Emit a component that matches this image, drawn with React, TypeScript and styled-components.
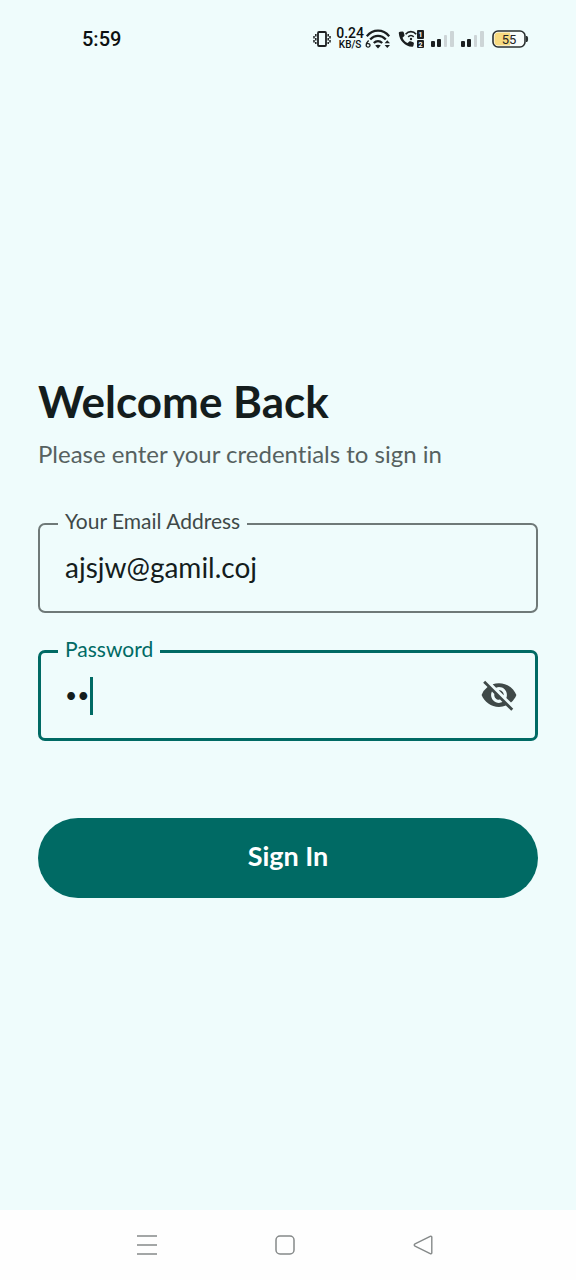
import React, { useState } from "react";
import styled, { createGlobalStyle } from "styled-components";
import { MdVisibility, MdVisibilityOff } from "react-icons/md";

const color = {
  page: "#effcfc",
  ink: "#141d1d",
  muted: "#566160",
  label: "#3f4948",
  outline: "#6f7978",
  primary: "#006a64",
  status: "#1b1f20",
};

const GlobalStyle = createGlobalStyle`
  *, *::before, *::after { box-sizing: border-box; }
  body {
    margin: 0;
    background: ${color.page};
    color: ${color.ink};
    font-family: Lato, "Open Sans", sans-serif;
    font-variant-ligatures: none;
  }
`;

const Screen = styled.div`
  display: flex;
  flex-direction: column;
  min-height: 100vh;
`;

const StatusBar = styled.header`
  display: flex;
  align-items: center;
  justify-content: space-between;
  height: 78px;
  padding: 0 47px 0 82px;
  font-family: Roboto, sans-serif;
  color: #0c1011;
`;

const Clock = styled.time`
  font-size: 20px;
  line-height: 24px;
  font-weight: 500;
`;

const StatusIcons = styled.div`
  display: flex;
  align-items: center;
  gap: 7px;
  svg { display: block; }
`;

const NetSpeed = styled.div`
  display: flex;
  flex-direction: column;
  align-items: center;
  margin: 0 -6px 0 -2px;
  font-weight: 500;
`;

const SpeedValue = styled.span`
  font-size: 14px;
  line-height: 11px;
`;

const SpeedUnit = styled.span`
  font-size: 10px;
  line-height: 11px;
`;

const Main = styled.main`
  flex: 1;
  display: flex;
  flex-direction: column;
  justify-content: center;
  padding: 0 38px 18px;
`;

const Title = styled.h1`
  margin: 0;
  font-size: 44px;
  line-height: 56px;
  font-weight: 700;
`;

const Subtitle = styled.p`
  margin: 9px 0 38px;
  font-size: 24px;
  line-height: 32px;
  color: ${color.muted};
`;

const Form = styled.form`
  display: flex;
  flex-direction: column;
`;

const Field = styled.fieldset<{ $active?: boolean }>`
  min-width: 0;
  height: 105px;
  margin: 0 0 23px;
  padding: 0 ${(p) => (p.$active ? 17 : 18)}px;
  border: ${(p) => (p.$active ? 3 : 2)}px solid ${(p) => (p.$active ? color.primary : color.outline)};
  border-radius: 7px;
  color: ${(p) => (p.$active ? color.primary : color.label)};
`;

const Legend = styled.legend`
  padding: 0 7px 6px;
  font-size: 21px;
  line-height: 26px;
`;

const InputRow = styled.div`
  position: relative;
  display: flex;
  align-items: center;
  height: 54px;
  padding-left: 7px;
`;

const Input = styled.input`
  flex: 1;
  min-width: 0;
  height: 40px;
  padding: 0;
  border: 0;
  outline: 0;
  background: transparent;
  color: ${color.ink};
  caret-color: transparent;
  font: 28px/40px Lato, "Open Sans", sans-serif;

  &[type="password"] {
    font-size: 21px;
  }
`;

const Caret = styled.span`
  position: absolute;
  left: 32px;
  top: 9px;
  width: 3px;
  height: 38px;
  background: ${color.primary};
`;

const IconButton = styled.button`
  display: flex;
  padding: 0;
  border: 0;
  background: transparent;
  color: ${color.label};
  cursor: pointer;
`;

const SubmitButton = styled.button`
  height: 80px;
  margin-top: 54px;
  padding: 0 0 4px;
  border: 0;
  border-radius: 40px;
  background: ${color.primary};
  color: #fff;
  font: 700 27px/32px Lato, "Open Sans", sans-serif;
  cursor: pointer;
`;

const NavBar = styled.nav`
  display: flex;
  align-items: center;
  justify-content: center;
  gap: 114px;
  height: 70px;
  padding-right: 6px;
  background: #fefefe;
`;

const NavButton = styled.button`
  display: flex;
  padding: 0;
  border: 0;
  background: transparent;
  cursor: pointer;
`;

const VibrateIcon = () => (
  <svg width="18" height="18" viewBox="0 0 18 18" fill="none" stroke={color.status} aria-hidden="true">
    <rect x="5" y="2" width="8" height="14" rx="1" strokeWidth="1.8" />
    <path d="M2.800 4v2.500M2.800 8v2.500M2.800 12v2M1 6v2.500M1 10v2.500M15.200 4v2.500M15.200 8v2.500M15.200 12v2M17 6v2.500M17 10v2.500" strokeWidth="1.500" />
  </svg>
);

const WifiIcon = () => (
  <svg width="26" height="20" viewBox="0 0 26 20" fill="none" stroke={color.status} strokeWidth="2.2" aria-hidden="true">
    <path d="M1.800 7.200C8-.2 18-.2 24.200 7.200M5.200 10.600c4.400-5 11.200-5 15.600 0M8.800 14c2.500-2.600 5.900-2.600 8.400 0" />
    <path d="M10.200 16.600 13 19.400l2.800-2.800c-1.500-1.300-4.100-1.300-5.600 0zM19.600 14.200h5.400l-2.700-3zM19.600 16h5.400l-2.700 3z" fill={color.status} stroke="none" />
    <path d="M3.600 11.500C1.800 13.300 1.200 14.800 1.200 16.300a1.900 1.900 0 1 0 3.800 0c0-1.400-1.300-2-2.600-1.600" strokeWidth="1.300" />
  </svg>
);

const WifiCallIcon = () => (
  <svg width="26" height="20" viewBox="0 0 26 20" aria-hidden="true">
    <path
      d="M.8 4.200C.7 3.300 1.200 2.900 2 2.800l2.400-.4c.6-.1 1 .2 1.200.7l.9 2.900c.1.500 0 .9-.4 1.300L4.500 8.700c1 2.400 2.800 4.300 5.200 5.400l1.500-1.500c.4-.4.8-.5 1.300-.3l2.700 1c.5.200.8.600.7 1.200l-.5 2.300c-.1.700-.6 1.100-1.300 1C6.900 17.300 1.400 11.500.8 4.200z"
      fill={color.status}
    />
    <path d="M7.600 5.200c3-3.500 7.600-3.500 10.600 0M10.200 7.900c1.700-1.800 3.800-1.800 5.500 0" fill="none" stroke={color.status} strokeWidth="1.600" />
    <circle cx="13" cy="10" r="1.200" fill={color.status} />
    <rect x="19" y="1" width="7" height="9" rx="1" fill={color.status} />
    <rect x="19" y="11" width="7" height="8" rx="1" fill={color.status} />
    <text x="22.500" y="8" textAnchor="middle" fontSize="7" fontWeight="700" fill="#fff">1</text>
    <text x="22.500" y="17.500" textAnchor="middle" fontSize="7" fontWeight="700" fill="#fff">2</text>
  </svg>
);

const SignalIcon = () => (
  <svg width="23" height="16" viewBox="0 0 23 16" aria-hidden="true">
    <rect x="0" y="10" width="4" height="6" rx="1" fill={color.status} />
    <rect x="6" y="8" width="4" height="8" rx="1" fill={color.status} />
    <rect x="13" y="4" width="3" height="12" rx="1" fill="#cdd5d7" />
    <rect x="19" y="0" width="4" height="16" rx="1" fill="#cdd5d7" />
  </svg>
);

const BatteryIcon = () => (
  <svg width="38" height="18" viewBox="-1 0 38 18" role="img" aria-label="Battery 55%">
    <rect x="1" y="1" width="32" height="16" rx="5" fill="#f7fcfb" />
    <path d="M6 2.500h12v13H6a3.500 3.500 0 0 1-3.500-3.500V6A3.500 3.500 0 0 1 6 2.500z" fill="#f7da80" />
    <rect x="1" y="1" width="32" height="16" rx="5" fill="none" stroke="#2b3030" strokeWidth="1.600" />
    <path d="M34.500 6c1.500.600 1.500 5.400 0 6z" fill="#2b3030" stroke="#2b3030" />
    <text x="17" y="13.500" textAnchor="middle" fontSize="13" fill="#242424">55</text>
  </svg>
);

const App: React.FC = () => {
  const [email, setEmail] = useState("ajsjw@gamil.coj");
  const [password, setPassword] = useState("ab");
  const [visible, setVisible] = useState(false);

  return (
    <>
      <GlobalStyle />
      <Screen>
        <StatusBar>
          <Clock>5:59</Clock>
          <StatusIcons>
            <VibrateIcon />
            <NetSpeed>
              <SpeedValue>0.24</SpeedValue>
              <SpeedUnit>KB/S</SpeedUnit>
            </NetSpeed>
            <WifiIcon />
            <WifiCallIcon />
            <SignalIcon />
            <SignalIcon />
            <BatteryIcon />
          </StatusIcons>
        </StatusBar>

        <Main>
          <Title>Welcome Back</Title>
          <Subtitle>Please enter your credentials to sign in</Subtitle>
          <Form onSubmit={(e) => e.preventDefault()}>
            <Field>
              <Legend>
                <label htmlFor="email">Your Email Address</label>
              </Legend>
              <InputRow>
                <Input id="email" type="email" value={email} onChange={(e) => setEmail(e.target.value)} />
              </InputRow>
            </Field>
            <Field $active>
              <Legend>
                <label htmlFor="password">Password</label>
              </Legend>
              <InputRow>
                <Input
                  id="password"
                  type={visible ? "text" : "password"}
                  value={password}
                  onChange={(e) => setPassword(e.target.value)}
                />
                <Caret />
                <IconButton type="button" aria-label="Show password" onClick={() => setVisible(!visible)}>
                  {visible ? <MdVisibility size={38} /> : <MdVisibilityOff size={38} />}
                </IconButton>
              </InputRow>
            </Field>
            <SubmitButton type="submit">Sign In</SubmitButton>
          </Form>
        </Main>

        <NavBar aria-label="System navigation">
          <NavButton type="button" aria-label="Recent apps">
            <svg width="24" height="24" viewBox="0 0 24 24" stroke="#858989" strokeWidth="1.600">
              <path d="M2 3h20M2 12h20M2 21h20" />
            </svg>
          </NavButton>
          <NavButton type="button" aria-label="Home">
            <svg width="24" height="24" viewBox="0 0 24 24" fill="none" stroke="#858989" strokeWidth="1.500">
              <rect x="3" y="3" width="18" height="18" rx="4" />
            </svg>
          </NavButton>
          <NavButton type="button" aria-label="Back">
            <svg width="24" height="24" viewBox="0 0 24 24" fill="none" stroke="#858989" strokeWidth="1.400">
              <path d="M19.200 3.300 4 10.800c-1 .5-1 1.900 0 2.400l15.200 7.500c.8.400 1.600-.1 1.600-.9V4.200c0-.8-.8-1.300-1.600-.9z" />
            </svg>
          </NavButton>
        </NavBar>
      </Screen>
    </>
  );
};

export default App;
